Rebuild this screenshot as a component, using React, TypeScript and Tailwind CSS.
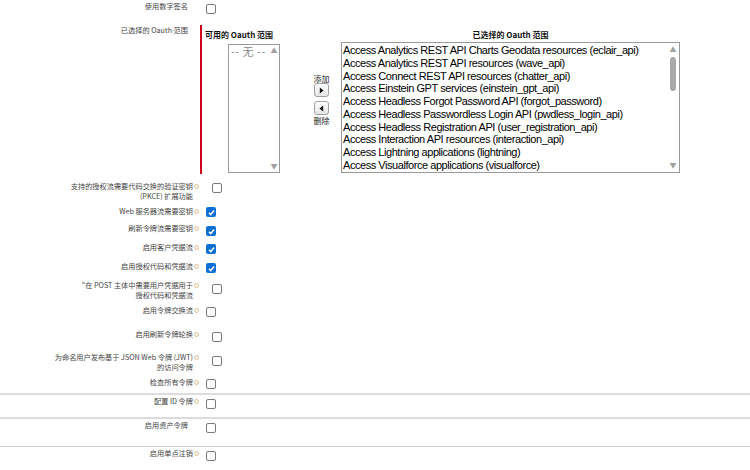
import React from 'react';

type Row = {
  lines: string[];
  info: boolean;
  checked: boolean;
  h: string;
  lt: string;
  ct: string;
  cl: string;
};

const scopes = [
  'Access Analytics REST API Charts Geodata resources (eclair_api)',
  'Access Analytics REST API resources (wave_api)',
  'Access Connect REST API resources (chatter_api)',
  'Access Einstein GPT services (einstein_gpt_api)',
  'Access Headless Forgot Password API (forgot_password)',
  'Access Headless Passwordless Login API (pwdless_login_api)',
  'Access Headless Registration API (user_registration_api)',
  'Access Interaction API resources (interaction_api)',
  'Access Lightning applications (lightning)',
  'Access Visualforce applications (visualforce)',
];

const rowsA: Row[] = [
  { lines: ['支持的授权流需要代码交换的验证密钥', '(PKCE) 扩展功能'], info: true, checked: false, h: 'h-[28px]', lt: 'pt-[5px]', ct: 'mt-[7px]', cl: 'ml-[12px]' },
  { lines: ['Web 服务器流需要密钥'], info: true, checked: true, h: 'h-[18px]', lt: 'pt-[2px]', ct: 'mt-[3px]', cl: 'ml-[6px]' },
  { lines: ['刷新令牌流需要密钥'], info: true, checked: true, h: 'h-[19px]', lt: 'pt-[1px]', ct: 'mt-[4px]', cl: 'ml-[6px]' },
  { lines: ['启用客户凭据流'], info: true, checked: true, h: 'h-[18px]', lt: 'pt-[1px]', ct: 'mt-[3px]', cl: 'ml-[6px]' },
  { lines: ['启用授权代码和凭据流'], info: true, checked: true, h: 'h-[19px]', lt: 'pt-[2px]', ct: 'mt-[4px]', cl: 'ml-[6px]' },
  { lines: ['"在 POST 主体中需要用户凭据用于', '授权代码和凭据流'], info: true, checked: false, h: 'h-[24px]', lt: 'pt-[2px]', ct: 'mt-[6px]', cl: 'ml-[12px]' },
  { lines: ['启用令牌交换流'], info: true, checked: false, h: 'h-[24px]', lt: 'pt-[3px]', ct: 'mt-[5px]', cl: 'ml-[6px]' },
  { lines: ['启用刷新令牌轮换'], info: true, checked: false, h: 'h-[24px]', lt: 'pt-[3px]', ct: 'mt-[6px]', cl: 'ml-[12px]' },
  { lines: ['为命名用户发布基于 JSON Web 令牌 (JWT)', '的访问令牌'], info: true, checked: false, h: 'h-[24px]', lt: 'pt-[2px]', ct: 'mt-[6px]', cl: 'ml-[12px]' },
  { lines: ['检查所有令牌'], info: true, checked: false, h: 'h-[19px]', lt: 'pt-[3px]', ct: 'mt-[5px]', cl: 'ml-[6px]' },
];

function Info() {
  return (
    <svg viewBox="0 0 6 6" className="w-[5px] h-[5px] ml-[1px] mt-[3px] shrink-0">
      <circle cx="3" cy="3" r="2.4" fill="none" stroke="#d4a867" strokeWidth="0.9" />
    </svg>
  );
}

function Box({ checked }: { checked: boolean }) {
  if (checked) {
    return (
      <span className="w-[10px] h-[10px] rounded-[2px] bg-[#0b6fd6] flex items-center justify-center">
        <svg viewBox="0 0 10 10" className="w-[9px] h-[9px]">
          <path d="M2.2 5.3 L4.2 7.3 L7.9 2.7" stroke="white" strokeWidth="1.7" fill="none" />
        </svg>
      </span>
    );
  }
  return <span className="block w-[10px] h-[10px] rounded-[2px] border border-[#7a7a7a] bg-white" />;
}

function Label({ lines, info }: { lines: string[]; info: boolean }) {
  return (
    <div className={`w-[200px] flex justify-end ${info ? 'pr-[1px]' : 'pr-[12px]'}`}>
      <div className="text-right text-[7.2px] leading-[10px] text-[#444]">
        {lines.map((l) => (
          <div key={l} className="whitespace-nowrap">{l}</div>
        ))}
      </div>
      {info && <Info />}
    </div>
  );
}

function CheckRow({ row }: { row: Row }) {
  return (
    <div className={`flex items-start ${row.h}`}>
      <div className={row.lt}>
        <Label lines={row.lines} info={row.info} />
      </div>
      <div className={`${row.ct} ${row.cl}`}>
        <Box checked={row.checked} />
      </div>
    </div>
  );
}

function ArrowBtn({ dir }: { dir: 'r' | 'l' }) {
  return (
    <div className="w-[15px] h-[14px] rounded-[3px] border border-[#a0a0a0] bg-gradient-to-b from-white to-[#e6e6e6] flex items-center justify-center">
      <svg viewBox="0 0 6 8" className="w-[5px] h-[7px]">
        {dir === 'r' ? <path d="M1 0.5 L5.5 4 L1 7.5 Z" fill="#111" /> : <path d="M5 0.5 L0.5 4 L5 7.5 Z" fill="#111" />}
      </svg>
    </div>
  );
}

export default function App() {
  return (
    <div className="w-[750px] h-[470px] bg-white overflow-hidden" style={{ fontFamily: '"Noto Sans CJK SC", "Liberation Sans", sans-serif' }}>
      {/* digital signature */}
      <div className="flex items-start h-[25px]">
        <div className="pt-[1px]">
          <Label lines={['使用数字签名']} info={false} />
        </div>
        <div className="mt-[4px] ml-[6px]">
          <Box checked={false} />
        </div>
      </div>

      {/* oauth scopes */}
      <div className="flex items-start h-[151px]">
        <div className="pt-[0px]">
          <Label lines={['已选择的 Oauth 范围']} info={false} />
        </div>
        <div className="w-[2px] h-[149px] bg-[#d0021b]" />
        <div className="w-[78px] pl-[3px] flex flex-col">
          <div className="mt-[5px] h-[10px] text-[8px] leading-[10px] font-bold text-[#111] whitespace-nowrap">可用的 Oauth 范围</div>
          <div className="ml-[23px] mt-[4px] w-[52px] h-[129px] border border-[#9a9a9a] flex">
            <div className="flex-1 pl-[2px] text-[11px] leading-[13px] tracking-[0.5px] text-[#888] whitespace-nowrap">-- 无 --</div>
            <div className="w-[10px] flex flex-col justify-between items-center py-[2px] text-[7px] leading-[7px] text-[#a0a0a0]">
              <span>▲</span>
              <span>▼</span>
            </div>
          </div>
        </div>
        <div className="w-[61px] pl-[33px]">
          <div className="w-[17px] flex flex-col items-center mt-[49px]">
            <div className="text-[8px] leading-[10px] text-[#222]">添加</div>
            <div className="mt-[-1px]"><ArrowBtn dir="r" /></div>
            <div className="mt-[4px]"><ArrowBtn dir="l" /></div>
            <div className="text-[8px] leading-[10px] text-[#222] mt-[1px]">删除</div>
          </div>
        </div>
        <div className="w-[339px] flex flex-col">
          <div className="mt-[5px] h-[10px] text-center text-[8px] leading-[10px] font-bold text-[#111]">已选择的 Oauth 范围</div>
          <div className="mt-[2px] h-[131px] border border-[#9a9a9a] flex">
            <div className="flex-1 pl-[1px] pt-[1px] text-[11px] leading-[12.75px] tracking-[-0.45px] text-black whitespace-nowrap" style={{ fontFamily: '"Liberation Sans", Arial, sans-serif' }}>
              {scopes.map((s) => (
                <div key={s}>{s}</div>
              ))}
            </div>
            <div className="w-[12px] flex flex-col items-center py-[3px] text-[7px] leading-[7px] text-[#a0a0a0]">
              <span>▲</span>
              <div className="mt-[4px] w-[6px] h-[34px] rounded-full bg-[#a9a9a9]" />
              <span className="mt-auto">▼</span>
            </div>
          </div>
        </div>
      </div>

      {/* flow options */}
      {rowsA.map((r) => (
        <CheckRow key={r.lines[0]} row={r} />
      ))}

      <div className="h-[2px] bg-[#dcdcdc]" />
      <CheckRow row={{ lines: ['配置 ID 令牌'], info: true, checked: false, h: 'h-[22px]', lt: 'pt-[1px]', ct: 'mt-[4px]', cl: 'ml-[6px]' }} />
      <div className="h-[2px] bg-[#dcdcdc]" />
      <CheckRow row={{ lines: ['启用资产令牌'], info: false, checked: false, h: 'h-[27px]', lt: 'pt-[1px]', ct: 'mt-[4px]', cl: 'ml-[6px]' }} />
      <div className="h-[1px] bg-[#cfcfcf]" />
      <CheckRow row={{ lines: ['启用单点注销'], info: true, checked: false, h: 'h-[23px]', lt: 'pt-[1px]', ct: 'mt-[4px]', cl: 'ml-[6px]' }} />
    </div>
  );
}
